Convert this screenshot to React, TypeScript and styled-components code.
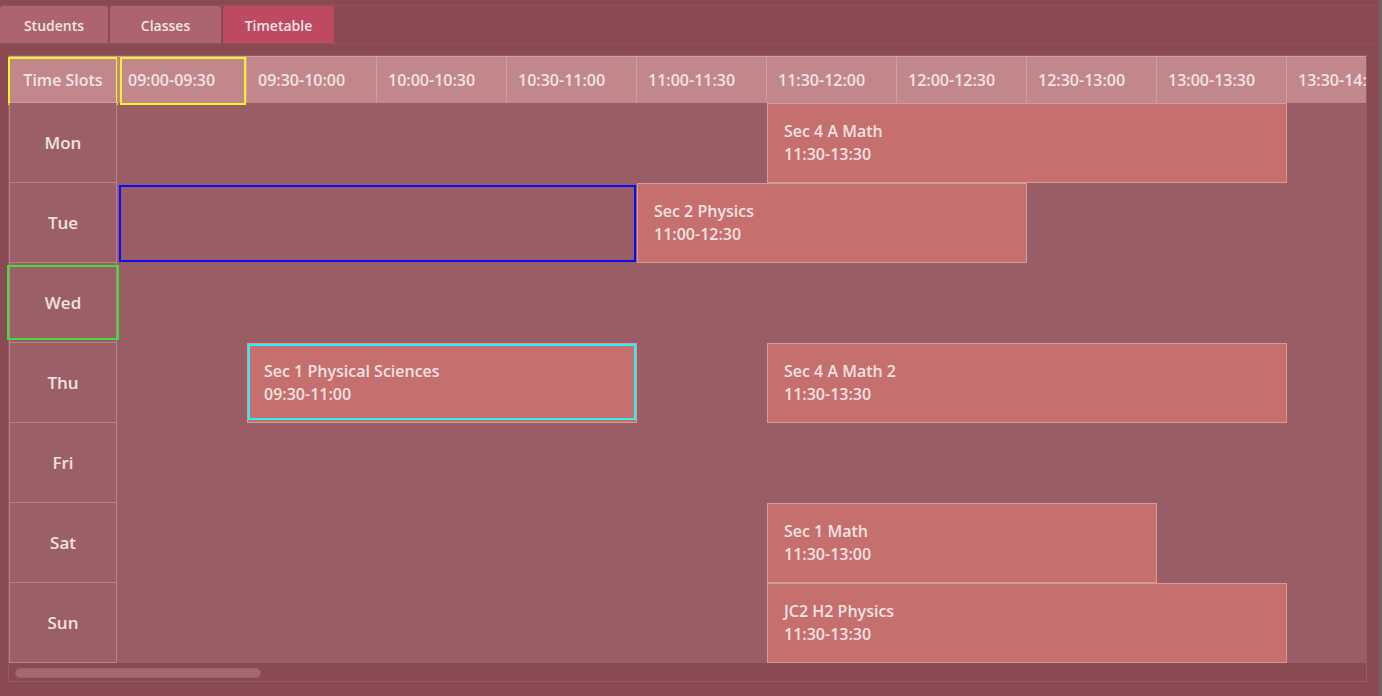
import React from "react";
import styled, { createGlobalStyle } from "styled-components";

const Global = createGlobalStyle`
  html, body { margin: 0; padding: 0; }
  body {
    background: #8a4a52;
    font-family: "Open Sans", "Noto Sans", sans-serif;
    overflow: hidden;
  }
  * { box-sizing: border-box; }
`;

const Page = styled.div`
  width: 1382px;
  height: 696px;
  background: #8a4a52;
  border-right: 3px solid #6f6466;
  padding-top: 5px;
  display: flex;
  flex-direction: column;
  overflow: hidden;
`;

const TabBar = styled.div`
  display: flex;
  gap: 2px;
  height: 39px;
  border-top: 1px solid #92525a;
  border-bottom: 1px solid #92525a;
`;

const Tab = styled.div<{ $active?: boolean; $w: number }>`
  width: ${(p) => p.$w}px;
  height: 37px;
  display: flex;
  align-items: center;
  justify-content: center;
  padding-top: 1px;
  background: ${(p) => (p.$active ? "#be4a61" : "#ac646e")};
  border-radius: 3px 3px 0 0;
  color: #f4e4e4;
  font-size: 14px;
  font-weight: 600;
`;

const Panel = styled.div`
  margin: 11px 0 0 8px;
  width: 1359px;
  border: 1px solid #9a5960;
  display: flex;
  flex-direction: column;
`;

const Viewport = styled.div`
  height: 607px;
  clip-path: inset(-4px 0 -4px -4px);
`;

const Grid = styled.div<{ $cols: number }>`
  display: grid;
  grid-template-columns: 108px repeat(${(p) => p.$cols}, 130px);
  grid-template-rows: 47px repeat(7, 80px);
  width: max-content;
  background: #995e65;
`;

const CornerCell = styled.div`
  position: relative;
  grid-row: 1;
  grid-column: 1;
  background: #c1878b;
  border: 1px solid #cf9fa3;
  display: flex;
  align-items: center;
  justify-content: center;
  color: #f4e3e3;
  font-size: 16px;
  font-weight: 600;
  white-space: nowrap;
`;

const SlotCell = styled.div`
  position: relative;
  grid-row: 1;
  background: #c1878b;
  border-right: 1px solid #cf9fa3;
  border-top: 1px solid #cf9fa3;
  border-bottom: 1px solid #c1878b;
  display: flex;
  align-items: center;
  padding-left: 11px;
  color: #f4e3e3;
  font-size: 16px;
  font-weight: 600;
  white-space: nowrap;
`;

const DayCell = styled.div<{ $row: number }>`
  position: relative;
  grid-column: 1;
  grid-row: ${(p) => p.$row};
  background: #9b6067;
  border-left: 1px solid #b98189;
  border-right: 1px solid #b98189;
  border-bottom: 1px solid #b98189;
  display: flex;
  align-items: center;
  justify-content: center;
  color: #f3e0e0;
  font-size: 17px;
  font-weight: 600;
`;

const EventBlock = styled.div<{ $row: number; $c1: number; $c2: number }>`
  position: relative;
  grid-row: ${(p) => p.$row};
  grid-column: ${(p) => p.$c1} / ${(p) => p.$c2};
  background: #c56f6e;
  border: 1px solid #d59b9b;
  display: flex;
  flex-direction: column;
  justify-content: center;
  padding-left: 16px;
  color: #f6e2e2;
  font-size: 16px;
  font-weight: 600;
  line-height: 23px;
`;

const DropZone = styled.div<{ $row: number; $c1: number; $c2: number }>`
  grid-row: ${(p) => p.$row};
  grid-column: ${(p) => p.$c1} / ${(p) => p.$c2};
  margin: 2px 1px 1px 2px;
  border: 2px solid #0a0aff;
`;

const Highlight = styled.span<{ $color: string; $t: number; $r: number; $b: number; $l: number }>`
  position: absolute;
  top: ${(p) => p.$t}px;
  right: ${(p) => p.$r}px;
  bottom: ${(p) => p.$b}px;
  left: ${(p) => p.$l}px;
  border: 2px solid ${(p) => p.$color};
  pointer-events: none;
`;

const ScrollTrack = styled.div`
  height: 18px;
  background: #8a4a52;
  padding: 5px 0 0 6px;
`;

const ScrollThumb = styled.div`
  width: 246px;
  height: 10px;
  border-radius: 5px;
  background: #a5686f;
  border: 1px solid #9c6067;
`;

const days = ["Mon", "Tue", "Wed", "Thu", "Fri", "Sat", "Sun"];

const slots: string[] = [];
for (let m = 9 * 60; m < 15 * 60; m += 30) {
  const f = (x: number) =>
    `${String(Math.floor(x / 60)).padStart(2, "0")}:${String(x % 60).padStart(2, "0")}`;
  slots.push(`${f(m)}-${f(m + 30)}`);
}

const toCol = (t: string) => {
  const [h, m] = t.split(":").map(Number);
  return (h * 60 + m - 540) / 30 + 2;
};

type Ev = { day: number; start: string; end: string; title: string; focus?: boolean };
const events: Ev[] = [
  { day: 0, start: "11:30", end: "13:30", title: "Sec 4 A Math" },
  { day: 1, start: "11:00", end: "12:30", title: "Sec 2 Physics" },
  { day: 3, start: "09:30", end: "11:00", title: "Sec 1 Physical Sciences", focus: true },
  { day: 3, start: "11:30", end: "13:30", title: "Sec 4 A Math 2" },
  { day: 5, start: "11:30", end: "13:00", title: "Sec 1 Math" },
  { day: 6, start: "11:30", end: "13:30", title: "JC2 H2 Physics" },
];

export default function App() {
  return (
    <Page>
      <Global />
      <TabBar>
        <Tab $w={108}>Students</Tab>
        <Tab $w={111}>Classes</Tab>
        <Tab $w={111} $active>
          Timetable
        </Tab>
      </TabBar>
      <Panel>
        <Viewport>
          <Grid $cols={slots.length}>
            <CornerCell>
              Time Slots
              <Highlight $color="#f2f22a" $t={0} $r={-2} $b={-3} $l={-2} />
            </CornerCell>
            {slots.map((s, i) => (
              <SlotCell key={s} style={{ gridColumn: i + 2 }}>
                {s}
                {i === 0 && <Highlight $color="#f2f22a" $t={0} $r={0} $b={-3} $l={3} />}
              </SlotCell>
            ))}
            {days.map((d, i) => (
              <DayCell key={d} $row={i + 2}>
                {d}
                {d === "Wed" && <Highlight $color="#3ee03e" $t={2} $r={-3} $b={2} $l={-3} />}
              </DayCell>
            ))}
            <DropZone $row={3} $c1={2} $c2={6} />
            {events.map((e) => (
              <EventBlock key={e.title} $row={e.day + 2} $c1={toCol(e.start)} $c2={toCol(e.end)}>
                <span>{e.title}</span>
                <span>
                  {e.start}-{e.end}
                </span>
                {e.focus && <Highlight $color="#2ff0f0" $t={0} $r={0} $b={2} $l={0} />}
              </EventBlock>
            ))}
          </Grid>
        </Viewport>
        <ScrollTrack>
          <ScrollThumb />
        </ScrollTrack>
      </Panel>
    </Page>
  );
}
